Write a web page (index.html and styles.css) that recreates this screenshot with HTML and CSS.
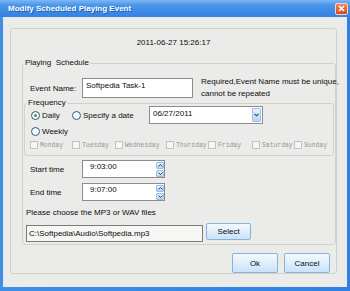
FILE: index.html
```html
<!DOCTYPE html>
<html lang="en">
<head>
    <meta charset="UTF-8">
    <title>Modify Scheduled Playing Event</title>
    <link rel="stylesheet" href="styles.css">
</head>
<body>

<div class="window">
    <div class="titlebar">
        <span class="title">Modify Scheduled Playing Event</span>
        <span class="close">
            <svg width="7" height="7" viewBox="0 0 7 7"><path d="M1 1L6 6M6 1L1 6" stroke="#fff" stroke-width="1.6"/></svg>
        </span>
    </div>

    <div class="body">
        <div class="frame">
            <div class="stamp">2011-06-27 15:26:17</div>

            <fieldset class="schedule">
                <legend>Playing&nbsp; Schedule</legend>

                <!-- event name -->
                <div class="row event-row">
                    <label class="lbl">Event Name:</label>
                    <div class="field event-name">Softpedia Task-1</div>
                    <div class="hint">Required,Event Name must be unique,<br>cannot be repeated</div>
                </div>

                <!-- frequency -->
                <fieldset class="frequency">
                    <legend>Frequency</legend>
                    <div class="freq-row first">
                        <span class="opt daily"><span class="radio on"></span>Daily</span>
                        <span class="opt specify"><span class="radio"></span>Specify a date</span>
                        <div class="combo">
                            <span>06/27/2011</span>
                            <span class="drop">
                                <svg width="5" height="4" viewBox="0 0 5 4"><path d="M0.5 0.8L2.5 2.8L4.5 0.8" fill="none" stroke="#1d3f7a" stroke-width="1.1"/></svg>
                            </span>
                        </div>
                    </div>
                    <div class="freq-row">
                        <span class="opt"><span class="radio"></span>Weekly</span>
                    </div>
                    <div class="days">
                        <span class="day"><span class="check"></span>Monday</span>
                        <span class="day"><span class="check"></span>Tuesday</span>
                        <span class="day"><span class="check"></span>Wednesday</span>
                        <span class="day"><span class="check"></span>Thursday</span>
                        <span class="day"><span class="check"></span>Friday</span>
                        <span class="day"><span class="check"></span>Saturday</span>
                        <span class="day"><span class="check"></span>Sunday</span>
                    </div>
                </fieldset>

                <!-- times -->
                <div class="row time-row">
                    <label class="lbl">Start time</label>
                    <div class="field time">
                        <span>9:03:00</span>
                        <span class="spin">
                            <span class="arrow"><svg width="5" height="3" viewBox="0 0 5 3"><path d="M0.5 2.5L2.5 0.5L4.5 2.5" fill="none" stroke="#1d3f7a"/></svg></span>
                            <span class="arrow"><svg width="5" height="3" viewBox="0 0 5 3"><path d="M0.5 0.5L2.5 2.5L4.5 0.5" fill="none" stroke="#1d3f7a"/></svg></span>
                        </span>
                    </div>
                </div>
                <div class="row time-row end">
                    <label class="lbl">End time</label>
                    <div class="field time">
                        <span>9:07:00</span>
                        <span class="spin">
                            <span class="arrow"><svg width="5" height="3" viewBox="0 0 5 3"><path d="M0.5 2.5L2.5 0.5L4.5 2.5" fill="none" stroke="#1d3f7a"/></svg></span>
                            <span class="arrow"><svg width="5" height="3" viewBox="0 0 5 3"><path d="M0.5 0.5L2.5 2.5L4.5 0.5" fill="none" stroke="#1d3f7a"/></svg></span>
                        </span>
                    </div>
                </div>

                <!-- audio file -->
                <div class="choose">Please choose the MP3 or WAV files</div>
                <div class="file-row">
                    <div class="field path">C:\Softpedia\Audio\Softpedia.mp3</div>
                    <button class="btn select">Select</button>
                </div>
            </fieldset>

            <div class="actions">
                <button class="btn">Ok</button>
                <button class="btn">Cancel</button>
            </div>
        </div>
    </div>
</div>

</body>
</html>
```

FILE: styles.css
```css
body {
    margin: 0;
    font-family: "Liberation Sans", Arial, sans-serif;
    font-size: 8px;
    color: #0c0c0c;
    background: #fff;
}

.window {
    width: 350px;
    height: 291px;
    display: flex;
    flex-direction: column;
    background: linear-gradient(90deg, #3f8fe8, #2f80e2);
}

/* title bar */
.titlebar {
    height: 17px;
    display: flex;
    align-items: center;
    justify-content: space-between;
    background: linear-gradient(#7db8f2 0%, #4b96ea 30%, #3a89e6 70%, #3582e2 100%);
}
.title {
    padding-left: 8px;
    font-weight: bold;
    color: #fff;
    text-shadow: 1px 1px 0 #1f5bb0;
}
.close {
    width: 11px;
    height: 10px;
    margin-right: 2px;
    display: flex;
    align-items: center;
    justify-content: center;
    border: 1px solid #f4d6c8;
    border-radius: 2px;
    background: linear-gradient(#f0895a, #d6451c);
}

.body {
    flex: 1;
    margin: 0 3px 4px 3px;
    padding: 11px 10px 0 7px;
    background: #ebebe9;
}

.frame {
    border: 1px solid #d2d2ca;
    border-radius: 3px;
    padding-left: 11px;
}

.stamp {
    margin-left: -11px;
    padding-top: 9px;
    line-height: 10px;
    text-align: center;
}

/* group boxes */
fieldset {
    margin: 0;
    min-inline-size: 0;
    border: 1px solid #d2d2ca;
    border-radius: 3px;
}
legend {
    padding: 0 1px;
    line-height: 10px;
}
.schedule {
    margin-top: 10px;
    padding: 10px 1px 2px 1px;
}
.frequency {
    padding: 0 0 3px 0;
}
.frequency legend {
    margin-left: 2px;
}

.row {
    display: flex;
    align-items: center;
}
.lbl {
    width: 52px;
    padding-left: 6px;
    flex: none;
}
.field {
    flex: none;
    box-sizing: border-box;
    border: 1px solid #8c8c8c;
    background: #fff;
    line-height: 10px;
}

.event-row {
    height: 20px;
}
.event-name {
    width: 111px;
    height: 20px;
    padding: 2px 3px;
}
.hint {
    flex: none;
    margin-left: 8px;
    line-height: 12px;
    white-space: nowrap;
}

/* frequency */
.freq-row {
    height: 14px;
    display: flex;
    align-items: center;
    padding-left: 6px;
}
.freq-row.first {
    height: 18px;
    margin-top: -2px;
}
.opt {
    flex: none;
    display: flex;
    align-items: center;
    gap: 2px;
}
.daily { width: 41px; }
.specify { width: 77px; }
.radio {
    width: 7px;
    height: 7px;
    border: 1px solid #2c5b8c;
    border-radius: 50%;
    background: #fbfbfb;
    display: flex;
    align-items: center;
    justify-content: center;
}
.radio.on::after {
    content: "";
    width: 3px;
    height: 3px;
    border-radius: 50%;
    background: #3aa43a;
}
.combo {
    flex: none;
    width: 114px;
    height: 18px;
    box-sizing: border-box;
    border: 1px solid #8c8c8c;
    background: #fff;
    display: flex;
    justify-content: space-between;
    padding: 2px 1px 1px 3px;
    line-height: 10px;
}
.drop, .arrow {
    display: flex;
    align-items: center;
    justify-content: center;
    box-sizing: border-box;
    border: 1px solid #9fbde4;
    border-radius: 1px;
    background: linear-gradient(#e6f1fc, #b9d5f4);
}
.drop {
    width: 9px;
    height: 14px;
    margin-top: -1px;
}

.days {
    height: 14px;
    display: grid;
    grid-template-columns: 42px 43px 51px 42px 44px 42px auto;
    align-items: center;
    padding-left: 5px;
    font-family: "Liberation Mono", "Courier New", monospace;
    font-size: 6.4px;
    color: #969696;
}
.day {
    display: flex;
    align-items: center;
    gap: 2px;
}
.check {
    width: 6px;
    height: 6px;
    border: 1px solid #c2c2c2;
    background: #f6f6f6;
}

/* times */
.time-row {
    height: 18px;
    margin-top: 4px;
}
.time-row.end {
    margin-top: 5px;
}
.time {
    width: 83px;
    height: 18px;
    display: flex;
    justify-content: space-between;
    padding: 1px 0 0 7px;
}
.spin {
    width: 8px;
    display: flex;
    flex-direction: column;
    gap: 1px;
}
.arrow {
    height: 7px;
}

.choose {
    margin-top: 7px;
    padding-left: 2px;
    line-height: 10px;
}
.file-row {
    margin-top: 5px;
    padding-left: 2px;
    display: flex;
    gap: 3px;
}
.path {
    width: 177px;
    height: 17px;
    margin-top: 2px;
    padding: 3px 2px;
    background: #f6f6f4;
    border-color: #7c7c7c;
}

/* buttons */
.btn {
    font: inherit;
    color: #0c0c0c;
    padding: 0;
    border: 1px solid #86b3de;
    border-radius: 2px;
    background: linear-gradient(#f4f9fe, #c9e2f9);
    box-sizing: border-box;
}
.select {
    width: 45px;
    height: 17px;
}
.actions {
    margin-top: 8px;
    padding-right: 6px;
    display: flex;
    justify-content: flex-end;
    gap: 6px;
}
.actions .btn {
    width: 46px;
    height: 20px;
}
```
